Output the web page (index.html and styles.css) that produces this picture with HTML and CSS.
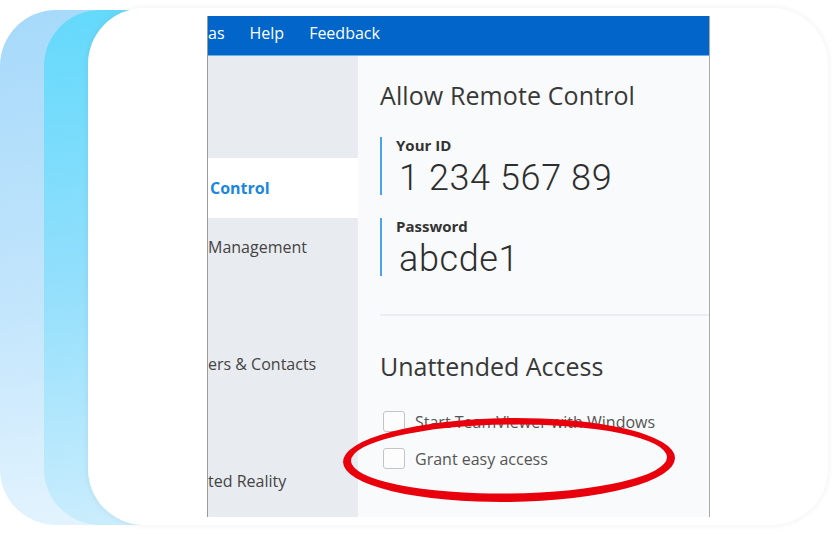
FILE: index.html
```html
<!DOCTYPE html>
<html lang="en">
<head>
<meta charset="utf-8">
<title>Allow Remote Control</title>
<link rel="stylesheet" href="styles.css">
</head>
<body>
<div class="stage">
  <div class="card card-back"></div>
  <div class="card card-mid"></div>
  <div class="card card-front">
    <div class="shot">
      <div class="menubar">
        <span class="menu-item">as</span>
        <span class="menu-item">Help</span>
        <span class="menu-item">Feedback</span>
      </div>
      <div class="shot-body">
        <nav class="sidebar">
          <div class="nav-item active">Control</div>
          <div class="nav-item">Management</div>
          <div class="nav-item"></div>
          <div class="nav-item">ers &amp; Contacts</div>
          <div class="nav-item"></div>
          <div class="nav-item">ted Reality</div>
        </nav>
        <main class="content">
          <h1 class="title">Allow Remote Control</h1>
          <div class="field">
            <div class="field-label">Your ID</div>
            <div class="field-value">1 234 567 89</div>
          </div>
          <div class="field">
            <div class="field-label">Password</div>
            <div class="field-value">abcde1</div>
          </div>
          <hr class="divider">
          <h2 class="title title-2">Unattended Access</h2>
          <div class="checks">
            <label class="check"><span class="box"></span><span>Start TeamViewer with Windows</span></label>
            <label class="check"><span class="box"></span><span>Grant easy access</span></label>
          </div>
        </main>
      </div>
    </div>
  </div>
  <svg class="marker" width="837" height="534" viewBox="0 0 837 534">
    <g transform="rotate(-0.7 509 459)">
      <path fill="#e8000d" fill-rule="evenodd" d="M343 460 a166 42 0 1 0 332 0 a166 42 0 1 0 -332 0 Z M351 459 a158 34.5 0 1 0 316 0 a158 34.5 0 1 0 -316 0 Z"/>
    </g>
  </svg>
</div>
</body>
</html>
```
FILE: styles.css
```css
* { box-sizing: border-box; }
html, body { margin: 0; padding: 0; background: #ffffff; }
body { font-family: "Open Sans", "Noto Sans", sans-serif; }

.stage {
  position: relative;
  width: 837px;
  height: 534px;
  display: grid;
  overflow: hidden;
}
.card {
  grid-area: 1 / 1;
  border-radius: 56px;
}
.card-back {
  margin: 10px 0 9px 0;
  width: 300px;
  background: linear-gradient(170deg, #a6d9fa 0%, #c4e6fc 55%, #e9f6fe 100%);
}
.card-mid {
  margin: 10px 0 9px 44px;
  width: 300px;
  background: linear-gradient(172deg, #63d9fb 0%, #93dffc 50%, #d2effd 100%);
}
.card-front {
  margin: 8px 9px 9px 88px;
  background: #ffffff;
  box-shadow: 0 0 6px rgba(0, 0, 0, 0.07);
  padding: 8px 0 0 119px;
  display: flex;
  align-items: flex-start;
}

.shot {
  width: 503px;
  height: 501px;
  border-left: 1px solid #9a9a9a;
  border-right: 1px solid #a8a8a8;
  display: flex;
  flex-direction: column;
  overflow: hidden;
}
.menubar {
  height: 40px;
  flex: none;
  background: #0265c9;
  border-bottom: 1px solid #6fb0ea;
  display: flex;
  align-items: center;
  gap: 25px;
  color: #ffffff;
  font-size: 16px;
  padding-bottom: 5px;
}
.shot-body {
  flex: 1;
  display: flex;
}
.sidebar {
  width: 150px;
  flex: none;
  background: #e8ebef;
  padding-top: 102px;
  display: flex;
  flex-direction: column;
}
.nav-item {
  height: 58.5px;
  flex: none;
  display: flex;
  align-items: center;
  font-size: 16px;
  color: #444444;
  white-space: nowrap;
}
.nav-item.active {
  background: #ffffff;
  color: #1a86e2;
  font-weight: 700;
  padding-left: 2px;
  height: 60px;
}
.content {
  flex: 1;
  background: #f9fafb;
  padding: 21px 0 0 22px;
  color: #333333;
}
.title {
  margin: 0;
  font-size: 25px;
  font-weight: 400;
  line-height: 36px;
  color: #383838;
  letter-spacing: 0.1px;
}
.field {
  margin-top: 24px;
  border-left: 2px solid #4aa4ec;
  padding-left: 14px;
  height: 58px;
}
.field + .field { margin-top: 23px; }
.field-label {
  font-size: 15px;
  font-weight: 700;
  line-height: 17px;
  color: #333333;
  margin-top: 0;
}
.field-value {
  font-family: Roboto, "Open Sans", sans-serif;
  font-weight: 300;
  font-size: 36px;
  line-height: 40px;
  color: #2e2e2e;
  padding-left: 3px;
  margin-top: 4px;
  letter-spacing: 0.6px;
}
.divider {
  margin: 38px 0 0 0;
  border: 0;
  border-top: 2px solid #e9eef4;
}
.title-2 {
  margin-top: 32px;
  letter-spacing: 0;
}
.checks {
  margin-top: 19px;
  display: flex;
  flex-direction: column;
}
.check {
  display: flex;
  align-items: center;
  gap: 10px;
  font-size: 16px;
  color: #555555;
  height: 37px;
  padding-left: 3px;
}
.box {
  width: 22px;
  height: 21px;
  border: 1px solid #c4c4c4;
  border-radius: 3px;
  background: #fdfdfd;
  flex: none;
}
.marker {
  position: absolute;
  left: 0;
  top: 0;
  pointer-events: none;
}
```
